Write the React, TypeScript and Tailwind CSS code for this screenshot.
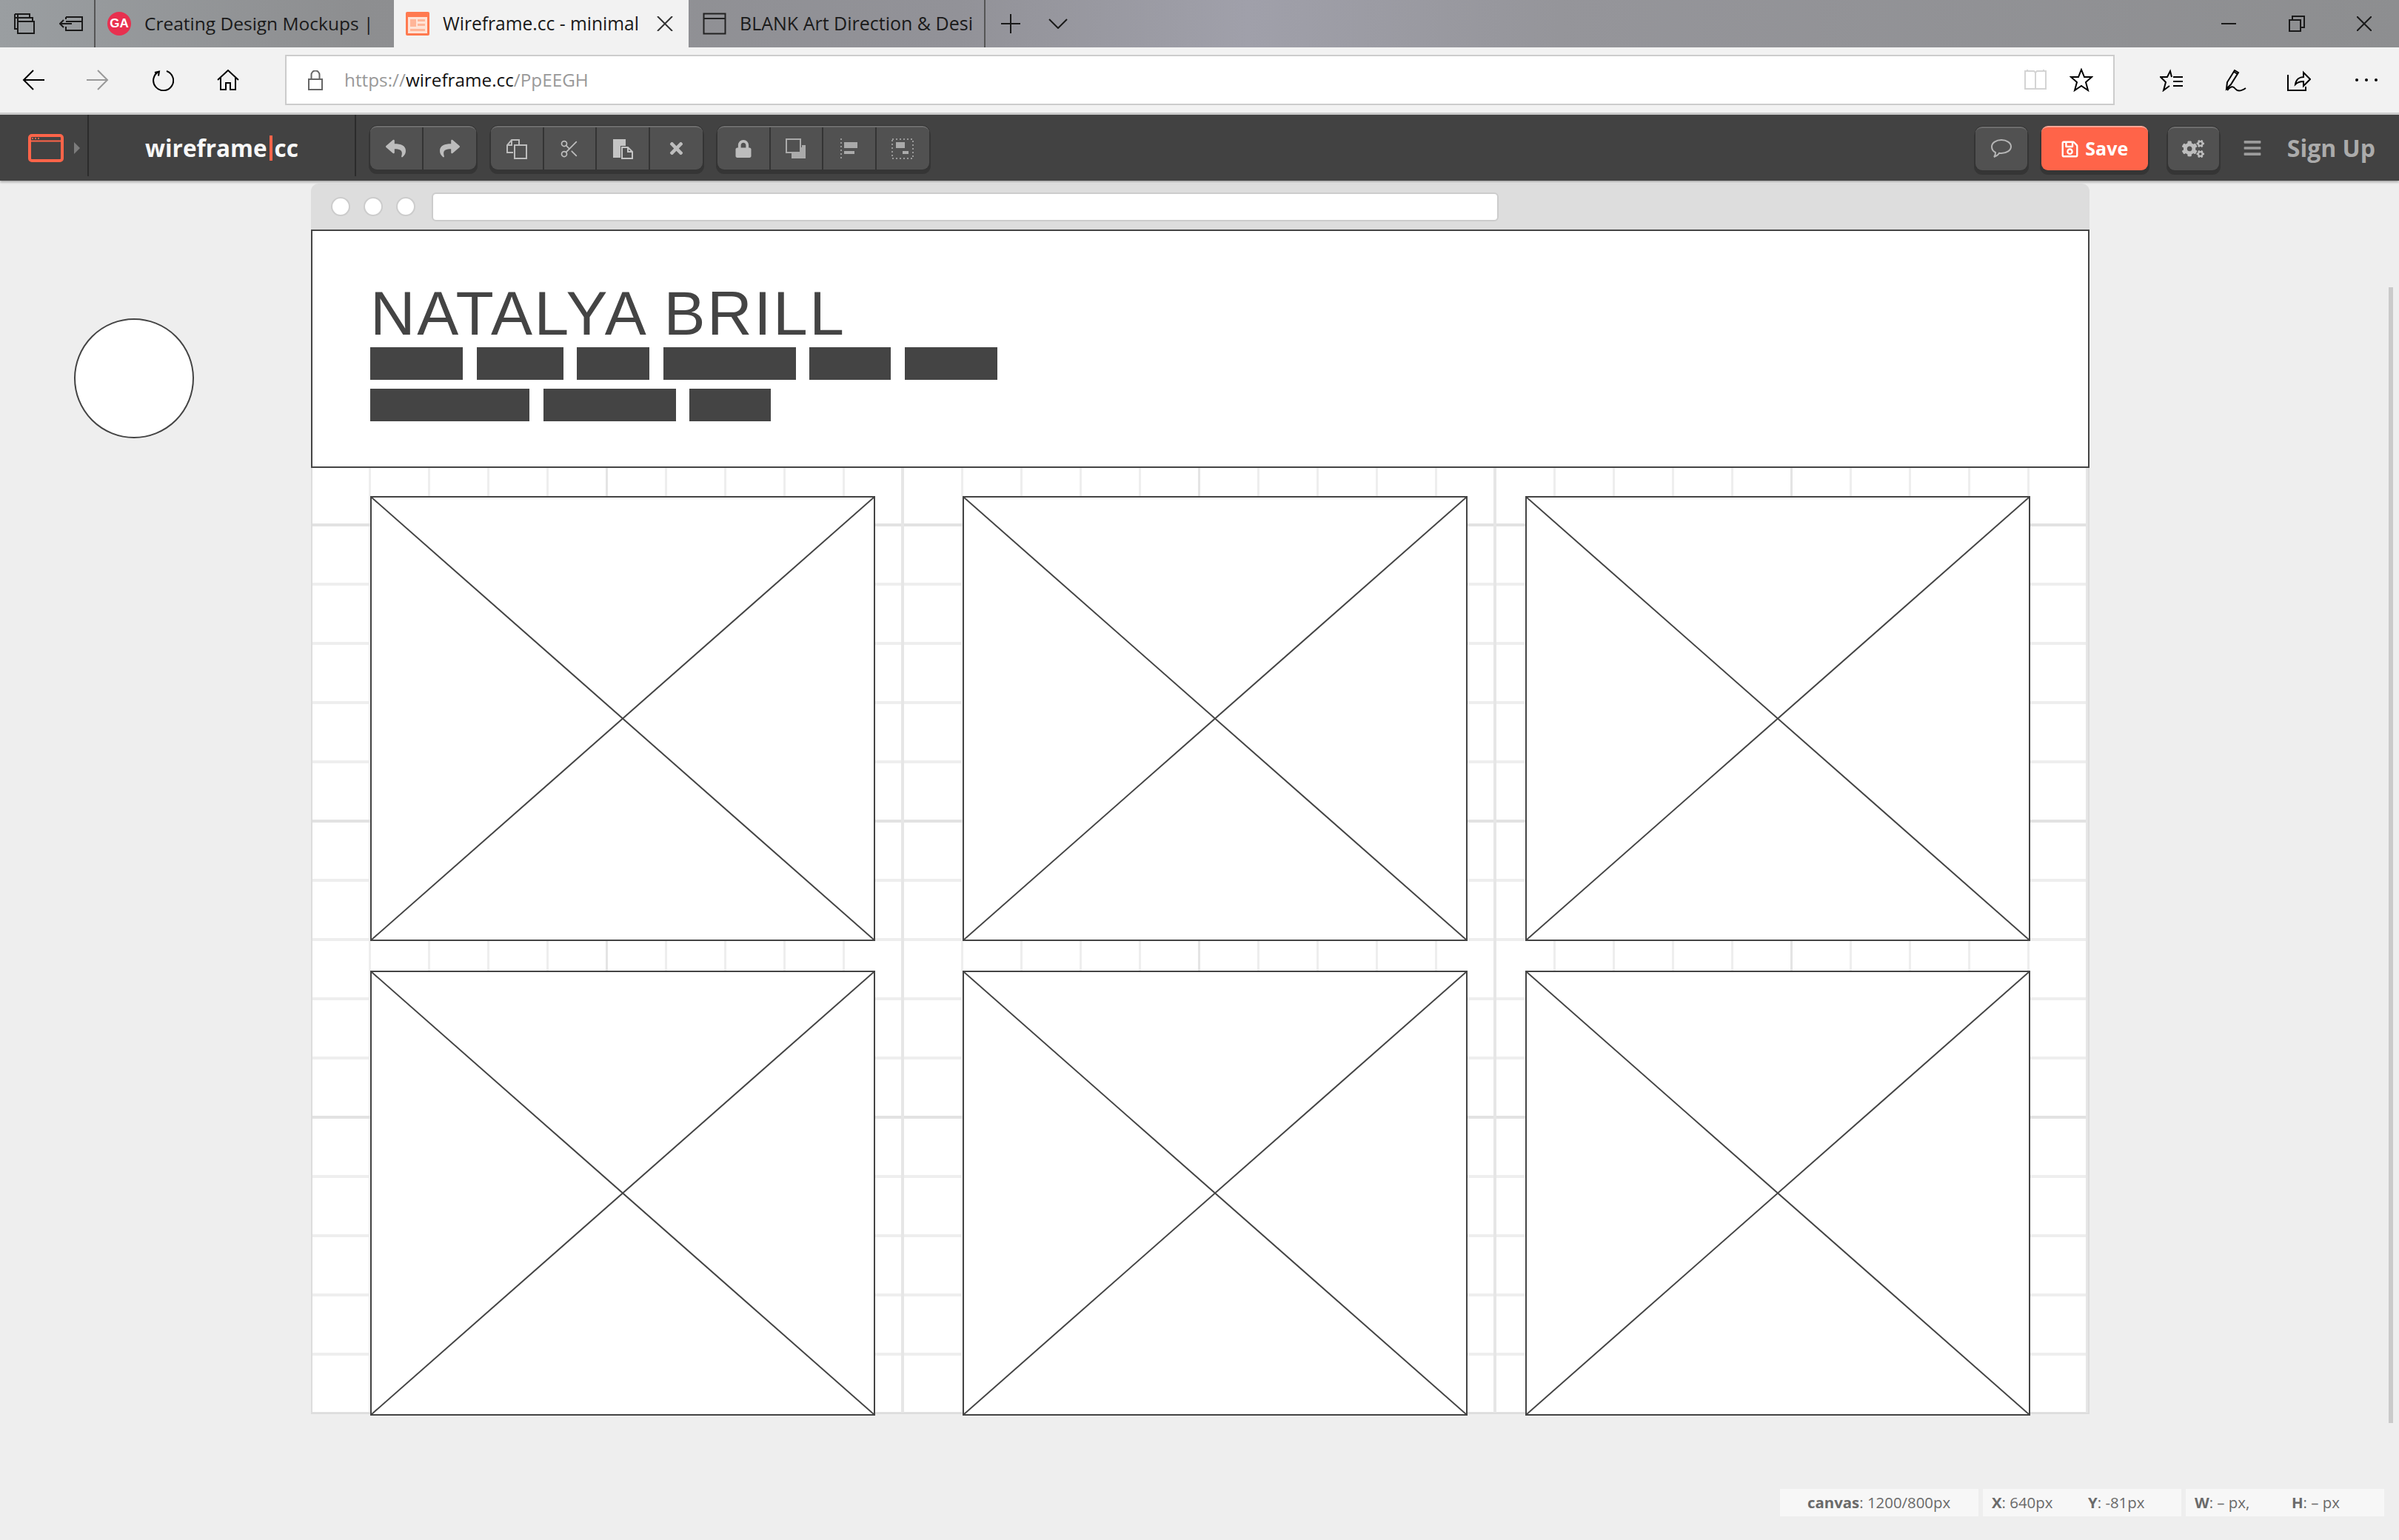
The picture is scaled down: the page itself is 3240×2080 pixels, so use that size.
import React from 'react';
import { Scissors } from 'lucide-react';
import { FaReply, FaShare, FaTimes, FaLock, FaCogs, FaRegSave, FaBars } from 'react-icons/fa';

const Edge: React.FC<{ w?: number; h?: number; vb: string; children: React.ReactNode; className?: string }> = ({ w = 32, h = 32, vb, children, className }) => (
  <svg width={w} height={h} viewBox={vb} fill="none" stroke="currentColor" strokeWidth="2" className={className ?? 'shrink-0'}>
    {children}
  </svg>
);

const GroupButton: React.FC<{ children: React.ReactNode; last?: boolean }> = ({ children, last }) => (
  <div className={`w-[71.5px] flex items-center justify-center text-[#bdbdbd] ${last ? '' : 'border-r-2 border-[#343434]'}`}>{children}</div>
);

const ToolGroup: React.FC<{ children: React.ReactNode }> = ({ children }) => (
  <div className="flex h-[59px] rounded-[9px] overflow-hidden bg-[#515151] border-t-2 border-[#6d6d6d] shadow-[0_0_0_1px_#343434,0_4px_0_2px_#353535]">
    {children}
  </div>
);

const WireImage: React.FC = () => (
  <div className="w-[682px] h-[601px] border-2 border-[#444] bg-white">
    <svg className="block w-full h-full" viewBox="0 0 678 597" preserveAspectRatio="none" stroke="#444" strokeWidth="2">
      <line x1="0" y1="0" x2="678" y2="597" />
      <line x1="678" y1="0" x2="0" y2="597" />
    </svg>
  </div>
);

const ImageRow: React.FC = () => (
  <div className="flex">
    <WireImage />
    <div className="ml-[118px]"><WireImage /></div>
    <div className="ml-[78px]"><WireImage /></div>
  </div>
);

const row1 = ['w-[125px]', 'w-[117px]', 'w-[98px]', 'w-[179px]', 'w-[110px]', 'w-[125px]'];
const row2 = ['w-[215px]', 'w-[179px]', 'w-[110px]'];

export default function App() {
  return (
    <div className="relative w-[3240px] h-[2080px] overflow-hidden flex flex-col bg-[#eeeeee] font-['Open_Sans',sans-serif]">
      {/* tab strip */}
      <div className="h-[64px] flex items-center text-[#1a1a1a] bg-[linear-gradient(90deg,#9a9ea1_0%,#8d8e90_15%,#929298_40%,#a0a0aa_52%,#95959a_65%,#8d8e90_100%)]">
        <div className="w-[129px] h-full flex items-center pl-[18px] border-r-2 border-[#555]">
          <Edge vb="0 0 30 30" w={30} h={30}>
            <path d="M6 7V2h16v5M2 7h20v0M6 12V7h20v5M6 12h22v16H6z" />
            <path d="M2 2h20M2 2v20h4" />
          </Edge>
          <Edge vb="0 0 32 22" w={32} h={22} className="ml-[32px] shrink-0">
            <path d="M9 2h22v18H9v-5M9 8h22M9 2v3M1 11h16M6 6l-5 5 5 5" />
          </Edge>
        </div>
        <div className="w-[403px] h-full flex items-center pl-[16px]">
          <div className="w-[32px] h-[32px] rounded-full bg-[#e8304f] text-white text-[17px] font-bold flex items-center justify-center font-['Liberation_Sans',sans-serif]">GA</div>
          <span className="ml-[18px] text-[24.5px] whitespace-nowrap">Creating Design Mockups |</span>
        </div>
        <div className="w-[398px] h-full bg-[#f2f2f2] flex items-center pl-[16px]">
          <svg width="32" height="32" viewBox="0 0 32 32" className="shrink-0">
            <rect x="0" y="0" width="32" height="32" rx="2" fill="#ff7a50" />
            <rect x="3" y="7" width="26" height="22" fill="#ffe3d6" />
            <rect x="6" y="10" width="8" height="10" fill="#ffb598" />
            <rect x="16" y="10" width="10" height="3" fill="#ffb598" />
            <rect x="16" y="16" width="10" height="3" fill="#ffb598" />
            <rect x="6" y="23" width="20" height="3" fill="#ffb598" />
          </svg>
          <span className="ml-[18px] text-[24.6px] whitespace-nowrap">Wireframe.cc - minimal</span>
          <Edge vb="0 0 22 20" w={22} h={20} className="ml-[24px] shrink-0 text-[#333]">
            <path d="M1 0l20 20M21 0L1 20" />
          </Edge>
        </div>
        <div className="w-[401px] h-full flex items-center pl-[19px] border-r-2 border-[#555]">
          <Edge vb="0 0 32 30" w={32} h={30} className="text-[#222] shrink-0">
            <path d="M1.5 1.5h29v27h-29zM1.5 8h29" />
          </Edge>
          <span className="ml-[18px] text-[25px] whitespace-nowrap">BLANK Art Direction &amp; Desi</span>
        </div>
        <Edge vb="0 0 26 26" w={26} h={26} className="ml-[21px] shrink-0">
          <path d="M13 0v26M0 13h26" />
        </Edge>
        <Edge vb="0 0 26 14" w={26} h={14} className="ml-[38px] shrink-0">
          <path d="M1 1l12 12L25 1" />
        </Edge>
        <div className="ml-auto flex items-center pr-[37px]">
          <Edge vb="0 0 20 2" w={20} h={2}><path d="M0 1h20" /></Edge>
          <Edge vb="0 0 22 22" w={22} h={22} className="ml-[71px] shrink-0">
            <path d="M1 6h15v15H1zM5 6V1h16v15h-5" />
          </Edge>
          <Edge vb="0 0 20 20" w={20} h={20} className="ml-[70px] shrink-0">
            <path d="M0 0l20 20M20 0L0 20" />
          </Edge>
        </div>
      </div>

      {/* address row */}
      <div className="h-[91px] shrink-0 flex items-start bg-[#f2f2f2] border-b-[3px] border-[#cccccc] text-black">
        <div className="h-[88px] w-[385px] flex items-center pl-[30px]">
          <Edge vb="0 0 30 28" w={30} h={28}><path d="M30 14H2M15 1L2 14l13 13" /></Edge>
          <Edge vb="0 0 30 28" w={30} h={28} className="ml-[57px] shrink-0 text-[#999]"><path d="M0 14h28M15 1l13 13-13 13" /></Edge>
          <Edge vb="0 0 30 30" w={30} h={30} className="ml-[58px] shrink-0">
            <path d="M10 3.5A13.5 13.5 0 1 0 20 3M4 5l6-1.5-1 6" />
          </Edge>
          <Edge vb="0 0 30 28" w={30} h={28} className="ml-[58px] shrink-0">
            <path d="M1 14L15 1l14 13M5 11v16h7v-9h6v9h7V11" />
          </Edge>
        </div>
        <div className="mt-[10px] w-[2471px] h-[68px] border-2 border-[#cccccc] bg-white flex items-center pl-[29px]">
          <Edge vb="0 0 20 27" w={20} h={27} className="text-[#666] shrink-0">
            <path d="M1 12h18v14H1zM4.500 12V6a5.500 5.500 0 0 1 11 0v6" />
          </Edge>
          <span className="ml-[29px] text-[24.3px] text-[#999] whitespace-nowrap">https://<span className="text-[#111]">wireframe.cc</span>/PpEEGH</span>
          <div className="ml-auto flex items-center pr-[27px]">
            <Edge vb="0 0 32 30" w={32} h={30} className="text-[#d4d4d4] shrink-0">
              <path d="M2 3h12l2 2 2-2h12v24H2zM16 5v22M5 1v2M27 1v2" />
            </Edge>
            <Edge vb="0 0 32 32" w={32} h={32} className="ml-[30px] shrink-0">
              <path d="M16 2l4 10h10l-8 7 3 11-9-6-9 6 3-11-8-7h10z" />
            </Edge>
          </div>
        </div>
        <div className="h-[88px] flex-1 flex items-center pl-[61px]">
          <Edge vb="0 0 32 32" w={32} h={32}>
            <path d="M16 12l-2-8-4 8H1l7 7-3 11 8-6M18 12h13M18 18h13M18 24h13" />
          </Edge>
          <Edge vb="0 0 30 32" w={30} h={32} className="ml-[56px] shrink-0">
            <path d="M2 28l1-9L13 3l5 3-10 16-6 6zM12 5l5 3M3 30c5-6 8-6 11-2s8 3 14-1" />
          </Edge>
          <Edge vb="0 0 32 30" w={32} h={30} className="ml-[54px] shrink-0">
            <path d="M1 8v21h24v-5M11 21c1-7 6-10 11-10V5l9 9-9 9v-6c-5 0-8 1-11 4z" />
          </Edge>
          <div className="ml-[60px] flex gap-[9px]">
            <div className="w-[4px] h-[4px] rounded-full bg-black" />
            <div className="w-[4px] h-[4px] rounded-full bg-black" />
            <div className="w-[4px] h-[4px] rounded-full bg-black" />
          </div>
        </div>
      </div>

      {/* wireframe.cc toolbar */}
      <div className="h-[89px] shrink-0 flex items-start bg-[#424242] shadow-[0_2px_3px_rgba(0,0,0,0.3)] z-10">
        <div className="w-[120px] h-[83px] flex items-center pl-[38px] pt-[7px] border-r-2 border-[#2b2b2b]">
          <svg width="48" height="38" viewBox="0 0 48 38" fill="none" stroke="#ff6449" strokeWidth="4" className="shrink-0">
            <rect x="2" y="2" width="44" height="34" rx="3" />
            <path d="M2 9.500h44" strokeWidth="2" />
            <path d="M5 6h2M9 6h2M13 6h2" strokeWidth="2" />
          </svg>
          <div className="ml-[14px] w-0 h-0 border-y-[8px] border-y-transparent border-l-[8px] border-l-[#7c7c7c]" />
        </div>
        <div className="w-[361px] h-[83px] flex items-center pl-[76px] pt-[7px] border-r-2 border-[#2b2b2b] text-[#f7f7f7] text-[31.5px] font-bold">
          <span>wireframe</span>
          <div className="mx-[3px] w-[4px] h-[34px] bg-[#ff6449]" />
          <span>cc</span>
        </div>
        <div className="flex gap-[20px] ml-[19px] mt-[15px]">
          <ToolGroup>
            <GroupButton><FaReply size={27} /></GroupButton>
            <GroupButton last><FaShare size={27} /></GroupButton>
          </ToolGroup>
          <ToolGroup>
            <GroupButton>
              <svg width="28" height="28" viewBox="0 0 28 28" fill="none" stroke="currentColor" strokeWidth="2">
                <path d="M9 19H1V9l6-7h10v6M11 9h16v18H11z" />
                <path d="M7 2v7H1" />
              </svg>
            </GroupButton>
            <GroupButton><Scissors size={28} strokeWidth={1.500} /></GroupButton>
            <GroupButton>
              <svg width="28" height="28" viewBox="0 0 28 28" className="text-[#c4c4c4]">
                <path fill="currentColor" d="M1 1h17v9h-7v16H1z" />
                <path fill="none" stroke="currentColor" strokeWidth="2" d="M13 12h8l6 6v9H13zM21 12v6h6" />
              </svg>
            </GroupButton>
            <GroupButton last><FaTimes size={25} /></GroupButton>
          </ToolGroup>
          <ToolGroup>
            <GroupButton><FaLock size={24} /></GroupButton>
            <GroupButton>
              <svg width="28" height="28" viewBox="0 0 28 28" fill="none" stroke="#aaaaaa">
                <path d="M8 12v15h19V9h-5v3z" fill="#aaaaaa" stroke="none" />
                <rect x="1" y="1" width="19" height="18" strokeWidth="2" fill="#515151" />
              </svg>
            </GroupButton>
            <GroupButton>
              <svg width="24" height="28" viewBox="0 0 24 28" fill="#aaaaaa">
                <rect x="5" y="5" width="18" height="8" />
                <rect x="5" y="17" width="14" height="4" />
                <path d="M1 0v28" stroke="#999" strokeWidth="2" strokeDasharray="2 3" />
              </svg>
            </GroupButton>
            <GroupButton last>
              <svg width="30" height="28" viewBox="0 0 30 28" fill="#aaaaaa">
                <rect x="6" y="5" width="12" height="8" />
                <rect x="15" y="17" width="8" height="4" />
                <rect x="1" y="1" width="28" height="26" fill="none" stroke="#999" strokeWidth="2" strokeDasharray="2 3" />
              </svg>
            </GroupButton>
          </ToolGroup>
        </div>
        <div className="ml-auto flex items-center mt-[15px] pr-[32px]">
          <div className="w-[70px] h-[59px] rounded-[9px] bg-[#515151] border-t-2 border-[#6d6d6d] shadow-[0_0_0_1px_#343434,0_4px_0_2px_#353535] flex items-center justify-center text-[#b5b5b5]">
            <svg width="28" height="26" viewBox="0 0 28 26" fill="none" stroke="currentColor" strokeWidth="2">
              <path d="M6 18C2 16 1 13 1 10c0-5 6-9 13-9s13 4 13 9-6 9-13 9c-1 0-2 0-3-.2-1 1.800-3 3.700-7 5.200 1.500-1.500 2-3.500 2-6z" />
            </svg>
          </div>
          <div className="ml-[19px] w-[144px] h-[60px] rounded-[9px] bg-[#ff6449] border-t-2 border-[#ffa696] shadow-[0_4px_0_2px_#353535] flex items-center justify-center gap-[8px] text-white text-[25px] font-bold">
            <FaRegSave size={25} />
            <span>Save</span>
          </div>
          <div className="ml-[27px] w-[69px] h-[59px] rounded-[9px] bg-[#515151] border-t-2 border-[#6d6d6d] shadow-[0_0_0_1px_#343434,0_4px_0_2px_#353535] flex items-center justify-center text-[#bdbdbd]">
            <FaCogs size={30} />
          </div>
          <FaBars size={26} className="ml-[32px] text-[#9c9c9c]" />
          <span className="ml-[34px] text-[32px] font-bold text-[#ababab] whitespace-nowrap">Sign Up</span>
        </div>
      </div>

      {/* canvas */}
      <main className="flex-1 pl-[420px] pt-[4px]">
        <div className="w-[2402px]">
          <div className="h-[62px] bg-[#dddddd] rounded-t-[10px] flex items-center pl-[27px]">
            <div className="w-[26px] h-[26px] rounded-full bg-white border-2 border-[#cccccc]" />
            <div className="ml-[18px] w-[26px] h-[26px] rounded-full bg-white border-2 border-[#cccccc]" />
            <div className="ml-[18px] w-[26px] h-[26px] rounded-full bg-white border-2 border-[#cccccc]" />
            <div className="ml-[22px] w-[1441px] h-[39px] rounded-[6px] bg-white border-2 border-[#cccccc]" />
          </div>
          <div className="h-[1600px] bg-white border-x-2 border-b-2 border-[#dddddd] [background-image:linear-gradient(to_right,#e6e6e6_4px,transparent_4px),linear-gradient(to_right,#e4e4e4_3px,transparent_3px),linear-gradient(to_bottom,#e2e2e2_4px,transparent_4px),linear-gradient(to_right,#eeeeee_3px,transparent_3px),linear-gradient(to_bottom,#eeeeee_4px,transparent_4px)] [background-size:800px_100%,400px_100%,100%_400px,80px_100%,100%_80px] [background-position:795px_0,396px_0,0_397px,76px_0,0_77px]">
            <div className="-mx-[2px] h-[322px] bg-white border-2 border-[#444444] pl-[78px] pt-[70px]">
              <div className="text-[84px] leading-[82px] tracking-[2.5px] text-[#444444] font-['Liberation_Sans',sans-serif] whitespace-nowrap">NATALYA BRILL</div>
              <div className="mt-[5px] flex gap-[18.6px]">
                {row1.map((w, i) => <div key={i} className={`h-[44px] bg-[#444444] ${w}`} />)}
              </div>
              <div className="mt-[12px] flex gap-[18.6px]">
                {row2.map((w, i) => <div key={i} className={`h-[44px] bg-[#444444] ${w}`} />)}
              </div>
            </div>
            <div className="pl-[78px] pt-[38px] flex flex-col gap-[40px]">
              <ImageRow />
              <ImageRow />
            </div>
          </div>
        </div>
      </main>

      {/* stray ellipse left of the page */}
      <div className="absolute left-[100px] top-[430px] w-[162px] h-[162px] rounded-full bg-white border-2 border-[#444444]" />

      {/* scrollbar */}
      <div className="absolute left-[3226px] top-[388px] w-[6px] h-[1534px] bg-[#cacaca]" />

      {/* status readout */}
      <div className="absolute left-[2404px] top-[2011px] flex gap-[6px] text-[20.4px] text-[#6a6a6a]">
        <div className="w-[268px] h-[37px] bg-[#f7f7f7] flex items-center pl-[37px]"><b>canvas</b>: 1200/800px</div>
        <div className="w-[268px] h-[37px] bg-[#f7f7f7] flex items-center pl-[12px]">
          <span className="w-[130px]"><b>X</b>: 640px</span><span><b>Y</b>: -81px</span>
        </div>
        <div className="w-[268px] h-[37px] bg-[#f7f7f7] flex items-center pl-[12px]">
          <span className="w-[131px]"><b>W</b>: – px,</span><span><b>H</b>: – px</span>
        </div>
      </div>
    </div>
  );
}
